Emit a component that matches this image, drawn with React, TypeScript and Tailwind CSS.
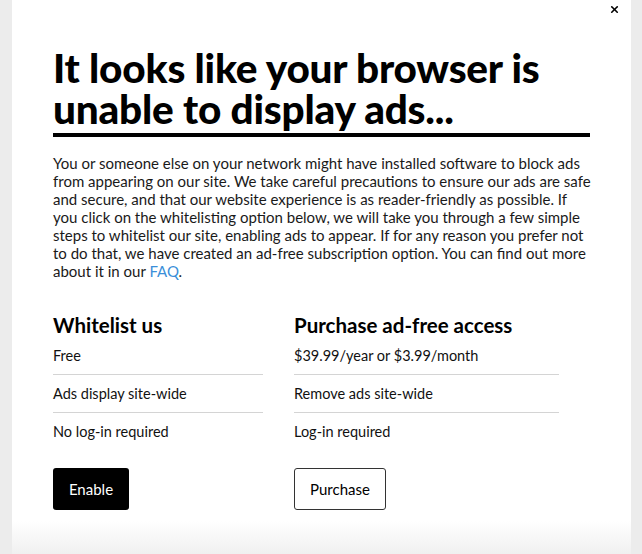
import { X } from "lucide-react";

const font = { fontFamily: "Lato, 'Noto Sans', sans-serif" };

const lines = [
  "You or someone else on your network might have installed software to block ads",
  "from appearing on our site. We take careful precautions to ensure our ads are safe",
  "and secure, and that our website experience is as reader-friendly as possible. If",
  "you click on the whitelisting option below, we will take you through a few simple",
  "steps to whitelist our site, enabling ads to appear. If for any reason you prefer not",
  "to do that, we have created an ad-free subscription option. You can find out more",
];

function Column({
  title,
  rows,
  width,
  button,
}: {
  title: string;
  rows: string[];
  width: string;
  button: React.ReactNode;
}) {
  return (
    <div className={width}>
      <h2 className="text-[20.5px] font-bold leading-[24px] text-black">{title}</h2>
      {rows.map((row, i) => (
        <div
          key={row}
          className={`h-[38px] flex items-center text-[14.5px] text-[#111] ${
            i < rows.length - 1 ? "border-b border-[#d4d4d4]" : ""
          }`}
        >
          {row}
        </div>
      ))}
      <div className="mt-[17px]">{button}</div>
    </div>
  );
}

export default function App() {
  return (
    <div className="w-[642px] h-[554px] bg-[#ececec] overflow-hidden" style={font}>
      <div className="relative mx-[12px] w-[619px] h-[554px] bg-gradient-to-b from-white from-[94%] to-[#f0f0f0] pl-[41px] pr-[41px] pt-[47px]">
        <button className="absolute right-[11px] top-[4px] text-black">
          <X size={11} strokeWidth={3.5} />
        </button>

        <h1 className="text-[40.5px] font-black leading-[41px] text-black tracking-[-0.2px]">
          It looks like your browser is
          <br />
          unable to display ads...
        </h1>
        <div className="h-[4px] bg-black mt-[4px] w-[537px]" />

        <p className="mt-[17px] text-[15px] leading-[18px] text-[#1a1a1a] whitespace-nowrap">
          {lines.map((l) => (
            <span key={l} className="block">
              {l}
            </span>
          ))}
          <span className="block">
            about it in our <a className="text-[#3a8fd9]">FAQ</a>.
          </span>
        </p>

        <div className="flex mt-[33px] gap-[31px]">
          <Column
            title="Whitelist us"
            width="w-[210px]"
            rows={["Free", "Ads display site-wide", "No log-in required"]}
            button={
              <button className="h-[42px] w-[76px] rounded-[3px] bg-black text-white text-[15px]">
                Enable
              </button>
            }
          />
          <Column
            title="Purchase ad-free access"
            width="w-[265px]"
            rows={["$39.99/year or $3.99/month", "Remove ads site-wide", "Log-in required"]}
            button={
              <button className="h-[42px] w-[92px] rounded-[3px] border border-[#333] bg-white text-black text-[15px]">
                Purchase
              </button>
            }
          />
        </div>
      </div>
    </div>
  );
}
